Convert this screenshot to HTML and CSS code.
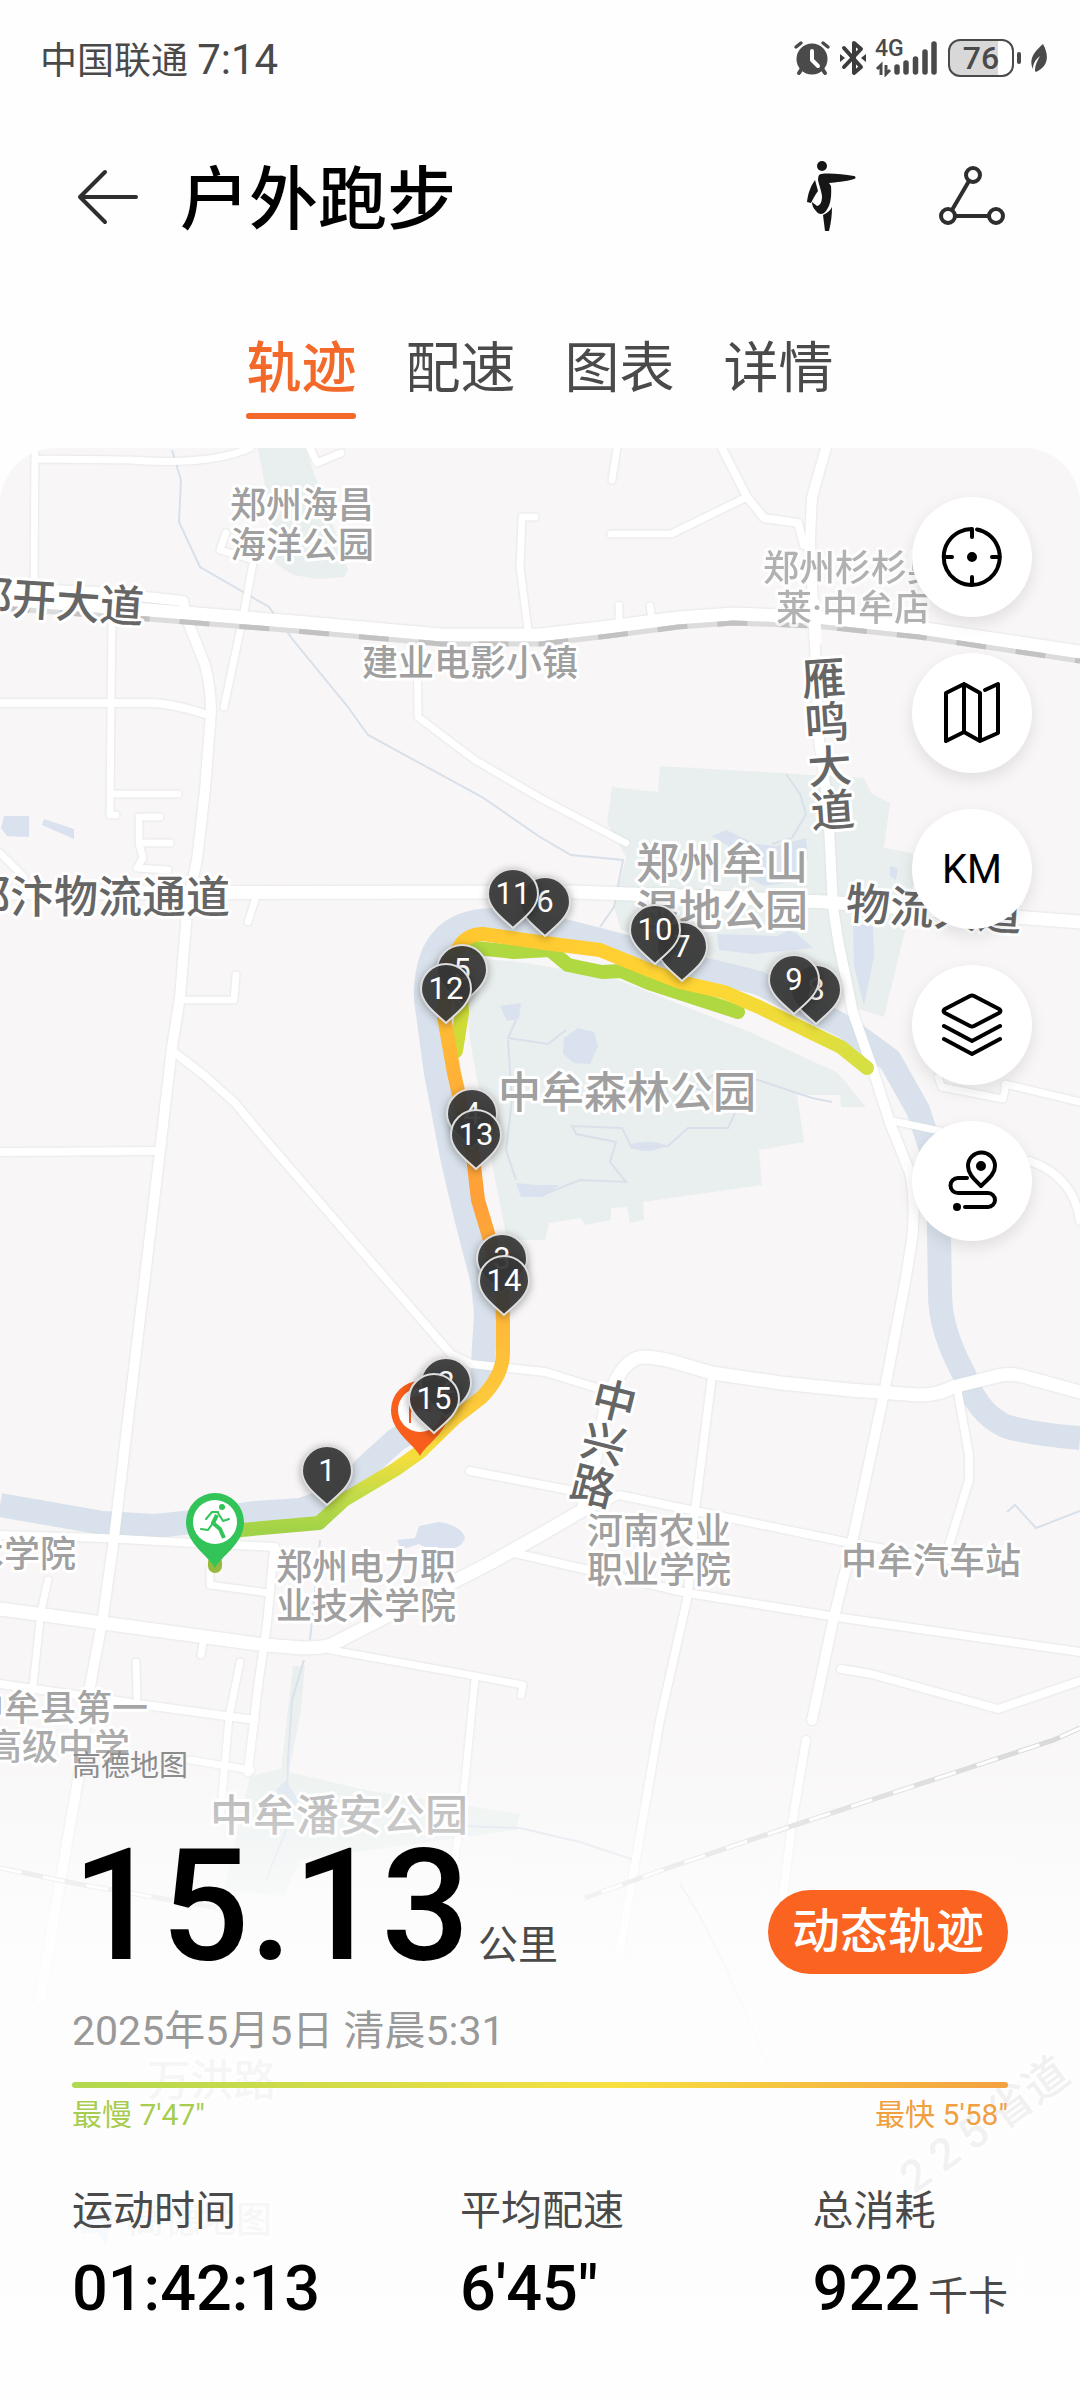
FILE: index.html
```
<!DOCTYPE html>
<html lang="zh-CN">
  <head>
    <meta charset="utf-8">
    <title>户外跑步</title>
    <meta name="viewport" content="width=device-width, initial-scale=1.0">
    <link rel="stylesheet" href="styles.css">
  </head>
  <body>
    <div class="mainbody">
      <div class="statusbar">
        <div class="carrier">中国联通 <span class="clock">7:14</span></div>
        <div class="statusicons">
          <svg width="38" height="38" viewBox="0 0 38 38">
            <path d="M10 28L6 34M28 28l4 6" stroke="#4a4a4a" stroke-width="4" stroke-linecap="round"/>
            <circle cx="19" cy="20" r="15.500" fill="#4a4a4a"/>
            <path d="M3 8l5-4M35 8l-5-4" stroke="#4a4a4a" stroke-width="3.500" stroke-linecap="round"/>
            <path d="M19 12v9l6 6" fill="none" stroke="#fff" stroke-width="4" stroke-linecap="round" stroke-linejoin="round"/>
          </svg>
          <svg width="26" height="38" viewBox="0 0 26 38">
            <path d="M4 9l17 19-7 6V4l7 6L4 28" fill="none" stroke="#3c3c3c" stroke-width="4" stroke-linejoin="round" stroke-linecap="round"/>
            <path d="M0 15l5 4-5 4zM26 15l-5 4 5 4z" fill="#3c3c3c"/>
          </svg>
          <div class="signal">
            <span class="net">4G</span>
            <svg width="64" height="38" viewBox="0 0 64 38">
              <path d="M6 36V26l-4 4M11 26v9l4-4" fill="none" stroke="#4a4a4a" stroke-width="3"/>
              <path d="M22 28v5M31 24v9M40.500 20v13M50 13v20M59 5v28" stroke="#4a4a4a" stroke-width="5.500" stroke-linecap="round"/>
            </svg>
          </div>
          <div class="battery"><span>76</span></div>
          <svg width="18" height="38" viewBox="0 0 18 38">
            <path d="M13 5c6 11 6 22-7 28l-1-1c0-7 3-11 5-15-5 4-7 8-7 13C-2 20 5 12 13 5z" fill="#4a4a4a"/>
          </svg>
        </div>
      </div>

      <div class="header">
        <button class="iconbtn" aria-label="返回">
          <svg width="72" height="72" viewBox="0 0 72 72"><path d="M33 11L8 36l25 25M8 36h56" fill="none" stroke="#2e2e2e" stroke-width="4" stroke-linecap="round" stroke-linejoin="round"/></svg>
        </button>
        <h1>户外跑步</h1>
        <button class="iconbtn" aria-label="拉伸">
          <svg width="72" height="72" viewBox="0 0 72 72" fill="#161616">
            <circle cx="26" cy="5" r="5"/>
            <path d="M25 13c9-1 21 0 33 2 2 0 2 3 0 3-9 3-18 3-25 4l2 3c1 12-1 22-7 27-3 2-6 1-8-2-3-3-4-6-4-9l5 4c4-1 5-5 5-10-1-7-3-11-4-16 0-4 1-6 3-6z"/>
            <path d="M19 19c1 4 2 7 3 11-3 4-5 8-7 12l-4-1c1-8 3-15 8-22z"/>
            <path d="M36 46c0 8-1 16-3 24h-4l-2-16c4-2 7-4 9-8z"/>
          </svg>
        </button>
        <button class="iconbtn" aria-label="分享">
          <svg width="72" height="72" viewBox="0 0 72 72" fill="none" stroke="#2e2e2e" stroke-width="4">
            <circle cx="37" cy="14" r="7"/><circle cx="12" cy="55" r="7"/><circle cx="60" cy="55" r="7"/>
            <path d="M33 20L16 49M19 55h34"/>
          </svg>
        </button>
      </div>

      <div class="tabs">
        <button class="tab active">轨迹</button>
        <button class="tab">配速</button>
        <button class="tab">图表</button>
        <button class="tab">详情</button>
      </div>

      <div class="mapbody">
        <svg class="map" viewBox="0 448 1080 1952">
          <defs>
            <linearGradient id="gradback" gradientUnits="userSpaceOnUse" x1="0" y1="930" x2="0" y2="1530">
              <stop offset="0" stop-color="#ffca2e"/>
              <stop offset=".2" stop-color="#ffb636"/>
              <stop offset=".45" stop-color="#ff9f38"/>
              <stop offset=".65" stop-color="#ffb838"/>
              <stop offset=".8" stop-color="#fdcb3c"/>
              <stop offset=".88" stop-color="#f3de3c"/>
              <stop offset=".94" stop-color="#c4dc48"/>
              <stop offset="1" stop-color="#a2d248"/>
            </linearGradient>
            <linearGradient id="gradtop" gradientUnits="userSpaceOnUse" x1="460" y1="0" x2="870" y2="0">
              <stop offset="0" stop-color="#ffc630"/>
              <stop offset=".6" stop-color="#ffd634"/>
              <stop offset=".8" stop-color="#eedc38"/>
              <stop offset="1" stop-color="#d4e044"/>
            </linearGradient>
            <path id="pin" class="pin" d="M0 34C-8 26-25 15-25 0A25 25 0 0 1 25 0C25 15 8 26 0 34z"/>
            <path id="bigpin" d="M0 46C-6 34-29 22-29 0A29 29 0 0 1 29 0C29 22 6 34 0 46z"/>
          </defs>
          <rect y="448" width="1080" height="1952" fill="#f8f6f7"/>

          <!-- parks -->
          <g fill="#e9efee">
            <path d="M258 448h47l8 22 14 37 21 63-4 7-27 2-24-4-18-12-6-56z"/>
            <path d="M660 766l204 12 7 15 19 10-6 45 28 5 6 25-11 45-23 94-31-10-15-34-79 0-138-43-7-23 12-50-19-34 5-36 46 5z"/>
            <path d="M462 957l56 5 93 15 141 56 86 40 28 34h-25l-1-12h-43l7 47-45 8 3 35-119 17 1 18-14 3-3-16-16 1v12l-26 5-4-7-32 5-4 17h-38l-13-67-24-133z"/>
            <path d="M293 1666h12l-4 44-12 62 76 18 155 24-4 16-216 30-16 36-60-6 26-114 31-7z"/>
          </g>

          <!-- water -->
          <g class="river">
            <path d="M0 1505L103 1523L155 1526L193 1522L255 1513L300 1510Q344 1498 365 1468L396 1440L448 1408L482 1380L486 1314L483 1283L466 1217L452 1157L436 1073L426 1000Q424 920 494 920L552 928L638 950L707 970L759 983L845 1027L890 1060L918 1110L938 1170L940 1294Q940 1330 964 1374Q976 1412 1005 1426Q1030 1434 1080 1438"/>
          </g>
          <g fill="#d9e2ee">
            <path d="M4 816h25v21l-22-1-6-8zM44 819l30 10v10l-32-14z"/>
            <path d="M397 1540l18-2 4-12 20-4c14 2 24 8 26 16-4 12-20 14-34 12l-12-6-18 6z"/>
            <path d="M500 1006l21-3-2 16-12 2zM564 1038l14-10 16 4 4 14-8 18-16-1-11-9z"/>
            <path d="M516 1183l20 2 23 0-16 12h-22zM628 1145q19-7 38 0-19 12-38 0z"/>
            <path d="M712 836l14-6 30 14 20 2 30-8 2 20-16 24-28 4-30-16-6-24zM717 934l60 2 12-6 8 4 16 14-60 6-34-4z"/>
            <path d="M853 924l20 2 1 30-10 50-10-40zM890 866l8 2-2 12-6-4z"/>
            <path d="M276 1790l10-10 12 20-8 20z"/>
          </g>
          <g class="stream">
            <path d="M172 450l9 30-2 42 21 45 69 40 24 33 55 67 20 28 114 62 58 40 31 18 52 5-9 47-14 20"/>
            <path d="M516 1020l-8 18 40 6 18-14 M508 1040l4 60-6 50 10 30 M540 1196l40-16 46 2-16-20 6-20-40-8-4-8 50 2 10 20 36-2 20-18 40 0 14-30-50-10 30-18 30 8 60 20 20 4"/>
            <path d="M786 774l14 20 6 20-14 24-20 6M1007 1512l8-7 21 23 44-17M320 1540l-10 100M304 1660l-12 40-4 60-2 70-20 50"/>
            <path d="M460 1826l60 2 60 14 60 20M680 1884c40 60 60 120 88 180"/>
          </g>

          <!-- roads -->
          <g class="roads">
            <g class="w6">
              <path d="M35 448l-1 140M35 459l95 1q80 6 120-12M112 623l-1 82-1 110h6M110 794h68M253 563l-10 54-19 90M226 533l-6 17 33 10M160 817h-21v26h31M139 843l4 15-6 10 31 2M255 900l-7 22M180 1000h54l2-25M535 517h-13l-2 50 8 63M617 448l-5 32M310 448l7 15 24-10M747 497l-76 37h-60M417 640l1 77 57 43 65 38 86 45M0 853l24 24M619 627v-22M652 620l-2-14"/>
              <path d="M210 1569v16l59 8M48 1580l-7 31-8 75M136 1662l1 36M240 1662l-11 55-9 103M203 1642l-2 13M190 1760l61 10M331 1650l144 26 48 9-2 10M475 1679l-14 141-10 60M893 1121l47 10M938 1077l4 10 61 12 3-14M1005 1084l75 18"/>
            </g>
            <g class="w8">
              <path d="M0 703h150q20 0 55 11M175 1053l30 23 30 27 35 42 181 209 20 10 74 8 52 16M0 1152l158-1M722 448l25 49 17 21 34 5 6 22"/>
              <path d="M0 1535l103 3 90 5 82 4M274 1549l-7 75-9 62-10 86M0 1684l138 20 117 16M712 1376l-17 135-7 84-28 125-40 230M470 1471l104 20M583 1512l36-17 81 17 150 31 100 17M510 1552l178 41 148 24 244 35M958 1393l11 62v25l-23 75M841 1669l30 5 127 35 82-28M1030 1161q44 16 50 60M806 1740l-14 84-10 80"/>
            </g>
            <g class="w10">
              <path d="M0 588l100 4 83 9 5 21 17 43q6 22 6 47l-6 78-8 70-9 40-8 97-8 50-12 104-27 226-19 161-11 79-13 69-9 76-10 58-31 180"/>
              <path d="M826 448l-14 49-2 43 5 107 4 93 9 67 5 100 5 33 15 73 19 54 18 56 20 50q6 30 2 67l-7 43-21 110-34 159-17 69-21 99"/>
            </g>
            <g class="w12">
              <path d="M0 893l540-1h34l138 5 114 5 254 20"/>
              <path d="M0 1609l103 14 162 22 38 3q18 0 28-3l161-83 48-27 43-25 24-106 9-24q12-22 27-23 12 0 28 4l41 12 69 10 69 7 69 5q20 0 34-8l48-12q14-2 28 3l51 14"/>
              <path d="M0 599l148 11 148 12 145 13h99l69-8 69-9 55-4 82 3 104 11 161 24"/>
            </g>
          </g>

          <!-- railways -->
          <g class="rail">
            <path d="M0 608l148 11 148 12 145 13h99l69-8 69-9 55-4 82 3 104 11 161 24" stroke="#dcdcdc"/>
            <path d="M0 608l148 11 148 12 145 13h99l69-8 69-9 55-4 82 3 104 11 161 24" stroke="#c2c2c2" stroke-dasharray="30 30"/>
            <path d="M1080 1728l-26 12-262 86-124 42-83 30M0 1868l83 17 158 27" stroke="#d4d4d4"/>
            <path d="M1080 1728l-26 12-262 86-124 42-83 30M0 1868l83 17 158 27" class="sleepers"/>
          </g>
          <path d="M813 600l3 44" stroke="#fff" stroke-width="12"/>

          <!-- place names -->
          <g class="place">
            <text x="302" y="518">郑州海昌</text><text x="302" y="558">海洋公园</text>
            <text x="470" y="676">建业电影小镇</text>
            <g opacity=".8"><text x="853" y="581">郑州杉杉奥</text><text x="853" y="621">莱·中牟店</text></g>
            <text x="4" y="1567">技术学院</text>
            <text x="366" y="1580">郑州电力职</text><text x="366" y="1619">业技术学院</text>
            <text x="659" y="1544">河南农业</text><text x="659" y="1583">职业学院</text>
            <text x="931" y="1574">中牟汽车站</text>
            <text x="58" y="1721">中牟县第一</text><text x="58" y="1760">高级中学</text>
            <text x="200" y="2233">高德地图</text>
          </g>
          <g class="place park">
            <text x="722" y="879">郑州牟山</text><text x="722" y="926">湿地公园</text>
            <text x="627" y="1108">中牟森林公园</text>
            <text x="339" y="1831">中牟潘安公园</text>
            <text x="212" y="2096">万洪路</text>
          </g>
          <g class="place street">
            <text x="56" y="617" transform="rotate(4 56 601)">郑开大道</text>
            <text x="98" y="913">郑汴物流通道</text>
            <text x="934" y="925" transform="rotate(4 934 909)">物流大道</text>
            <text class="upright" x="824" y="744" transform="rotate(-4 824 744)">雁鸣大道</text>
            <text class="upright" x="600" y="1442" transform="rotate(14 600 1442)">中兴路</text>
            <text x="984" y="2140" transform="rotate(-36 984 2124)">2 2 5 省道</text>
          </g>
          <path d="M82 2222l34-18-10 42-8-14-16 2z" fill="#8fc4f0"/>

          <!-- run track -->
          <g class="track">
            <path d="M476 948l38 4 36-2 18 15 34 7 19-1 28 12 89 29" stroke="#b0d840"/>
            <path d="M461 995l1 18-6 38" stroke="#cfdc38"/>
            <path d="M215 1562v4" stroke="#96b83c"/>
            <path d="M867 1068l-26-21-31-15-51-25-35-15-44-10-31-12-49-20-55-7-62-9q-14 0-22 10" stroke="url(#gradtop)"/>
            <path d="M463 943q-14 14-18 34l-1 40 10 56 19 84 5 43 12 40 12 50 1 33v30q0 22-21 44l-27 21-35 34-24 17-52 31-25 23-78 7-26 8" stroke="url(#gradback)"/>
          </g>

          <!-- start and finish -->
          <g transform="translate(420 1410)">
            <use href="#bigpin" fill="#f85f1c"/><circle r="22" fill="#fff"/>
            <path d="M-10-11v24M-10-11q10-5 20 0v12q-10-5-20 0" fill="#f85f1c" stroke="#f85f1c" stroke-width="2"/>
          </g>
          <g transform="translate(215 1522)">
            <use href="#bigpin" fill="#32c458"/><circle r="22" fill="#fff"/>
            <circle cx="7" cy="-15" r="3" fill="#32c458"/>
            <path d="M3-9l5 8 6-2M3-10l-6 0-6 7M-14 7l7 1 5-7" fill="none" stroke="#32c458" stroke-width="2" stroke-linecap="round" stroke-linejoin="round"/>
            <path d="M2-7L-2 1l7 6 4 9" fill="none" stroke="#32c458" stroke-width="4" stroke-linejoin="round"/>
          </g>

          <!-- kilometre pins -->
          <g class="pins">
            <g transform="translate(327 1471)"><use href="#pin"/><text y="10">1</text></g>
            <g transform="translate(446 1383)"><use href="#pin"/><text y="10">2</text></g>
            <g transform="translate(502 1259)"><use href="#pin"/><text y="10">3</text></g>
            <g transform="translate(472 1114)"><use href="#pin"/><text y="10">4</text></g>
            <g transform="translate(462 970)"><use href="#pin"/><text y="10">5</text></g>
            <g transform="translate(545 902)"><use href="#pin"/><text y="10">6</text></g>
            <g transform="translate(682 947)"><use href="#pin"/><text y="10">7</text></g>
            <g transform="translate(816 990)"><use href="#pin"/><text y="10">8</text></g>
            <g transform="translate(794 980)"><use href="#pin"/><text y="10">9</text></g>
            <g transform="translate(655 930)"><use href="#pin"/><text y="10">10</text></g>
            <g transform="translate(513 894)"><use href="#pin"/><text y="10">11</text></g>
            <g transform="translate(446 989)"><use href="#pin"/><text y="10">12</text></g>
            <g transform="translate(476 1135)"><use href="#pin"/><text y="10">13</text></g>
            <g transform="translate(504 1281)"><use href="#pin"/><text y="10">14</text></g>
            <g transform="translate(434 1399)"><use href="#pin"/><text y="10">15</text></g>
          </g>
        </svg>

        <div class="tools">
          <button class="tool" aria-label="定位">
            <svg width="64" height="64" viewBox="0 0 64 64">
              <path d="M37 4.500A28 28 0 1 1 32 4v8M4 32h8M52 32h8M32 52v8"/>
              <circle cx="32" cy="32" r="3" fill="#000"/>
            </svg>
          </button>
          <button class="tool" aria-label="地图类型">
            <svg width="64" height="64" viewBox="0 0 64 64"><path d="M45 9l13-6v49l-18 8-16-9-18 9V12l18-9 16 9v48M24 3v48"/></svg>
          </button>
          <button class="tool">KM</button>
          <button class="tool" aria-label="图层">
            <svg width="64" height="64" viewBox="0 0 64 64"><path d="M30 3L5 16q-3 2 0 4l25 13q2 1 4 0l25-13q3-2 0-4L34 3q-2-1-4 0zM4 33l28 15 28-15M4 46l28 15 28-15"/></svg>
          </button>
          <button class="tool" aria-label="路线">
            <svg width="64" height="64" viewBox="0 0 64 64">
              <path d="M41 37c-7-7-13-12-13-20a13 13 0 0 1 27 0c0 8-7 13-14 20zM27 29H18a7 7 0 0 0 0 15h30a7 7 0 0 1 0 14H25"/>
              <circle cx="41" cy="17" r="3" fill="#000"/><circle cx="17" cy="58" r="2" fill="#000"/>
            </svg>
          </button>
        </div>

        <div class="panel">
          <div class="mapcredit">高德地图</div>
          <div class="distancerow">
            <div class="distance">15.13<span class="unit">公里</span></div>
            <button class="btnplay">动态轨迹</button>
          </div>
          <div class="date">2025年5月5日 清晨5:31</div>
          <div class="pacebar"></div>
          <div class="pacerange">
            <span class="slow">最慢 7'47"</span>
            <span class="fast">最快 5'58"</span>
          </div>
          <dl class="stats">
            <div><dt>运动时间</dt><dd>01:42:13</dd></div>
            <div><dt>平均配速</dt><dd>6'45"</dd></div>
            <div><dt>总消耗</dt><dd>922<span class="unit">千卡</span></dd></div>
          </dl>
        </div>
      </div>
    </div>
  </body>
</html>
```
FILE: styles.css
```
*{box-sizing:border-box;margin:0;padding:0;font-family:Roboto,"Noto Sans CJK SC",sans-serif;}
body{background:#fefefe;color:#000;}
button{background:none;border:none;cursor:pointer;color:#000;}
svg{display:block;}
.mainbody{width:100%;}

.statusbar{height:116px;padding:0 32px 0 40px;display:flex;align-items:center;justify-content:space-between;
  color:#4a4a4a;font-size:37px;}
.clock{font-size:42px;}
.statusicons{display:flex;align-items:center;gap:9px;}
.signal{position:relative;}
.net{position:absolute;top:0;left:0;font-size:23px;line-height:20px;font-weight:500;}
.battery{position:relative;width:66px;height:38px;margin-right:7px;border:2px solid #4a4a4a;border-radius:12px;
  background:linear-gradient(to right, #d8d8d8 78%, #fff 78%);display:flex;align-items:center;justify-content:center;}
.battery span{font-size:32px;line-height:34px;font-weight:500;}
.battery::after{content:"";position:absolute;right:-9px;top:11px;width:4px;height:12px;border-radius:2px;background:#4a4a4a;}

.header{height:162px;padding:0 72px;display:flex;align-items:center;gap:68px;}
.header h1{flex:1;margin-left:-32px;padding-top:8px;font-size:69px;font-weight:500;line-height:80px;}
.iconbtn{width:72px;height:72px;}
.iconbtn svg{overflow:visible;}

.tabs{padding:58px 0 29px;display:flex;justify-content:center;gap:49px;}
.tab{position:relative;font-size:55px;line-height:64px;padding-bottom:19px;color:#4a4a4a;}
.tab.active{color:#f2692a;font-weight:500;}
.tab.active::after{content:"";position:absolute;left:0;bottom:0;width:100%;height:6px;border-radius:3px;background:#f2692a;}

/* map, tools and panel share one grid cell */
.mapbody{display:grid;border-radius:56px 56px 0 0;overflow:hidden;}
.mapbody > *{grid-area:1/1;}
.map{width:100%;height:auto;}
.river{fill:none;stroke:#d9e2ec;stroke-width:24;stroke-linejoin:round;}
.stream{fill:none;stroke:#d9e0ea;stroke-width:2;}
.roads{fill:none;stroke:#fff;stroke-linejoin:round;stroke-linecap:round;filter:drop-shadow(0 0 1px #d4dad8);}
.w6{stroke-width:7;}
.w8{stroke-width:8;}
.w10{stroke-width:10;}
.w12{stroke-width:13;}
.rail{fill:none;stroke-width:5;}
.sleepers{stroke:#fff;stroke-width:3;stroke-dasharray:22 22;}
.place{font-size:36px;font-weight:500;text-anchor:middle;fill:#a0a0a0;stroke:#fff;stroke-width:6px;
  stroke-linejoin:round;paint-order:stroke;}
.park{font-size:43px;}
.street{font-size:44px;fill:#666;}
.upright{writing-mode:vertical-rl;}
.track{fill:none;stroke-width:14;stroke-linejoin:round;stroke-linecap:round;}
.pin{fill:#373737;fill-opacity:.92;stroke:#dedede;stroke-width:2;filter:drop-shadow(0 2px 4px rgba(0,0,0,.35));}
.pins text{font-size:31px;fill:#fff;text-anchor:middle;}

.tools{justify-self:end;align-self:start;padding:49px 48px 0 0;display:flex;flex-direction:column;gap:36px;z-index:1;}
.tool{width:120px;height:120px;border-radius:50%;background:#fff;display:flex;align-items:center;justify-content:center;
  font-size:40px;box-shadow:0 6px 16px rgba(0,0,0,.1);}
.tool svg{fill:none;stroke:#000;stroke-width:4;stroke-linecap:round;stroke-linejoin:round;}

.panel{align-self:end;padding:120px 72px 75px;
  background:linear-gradient(to bottom, rgba(254,254,254,0) 6%, rgba(254,254,254,.15) 16%, rgba(254,254,254,.4) 25%,
  rgba(254,254,254,.75) 36%, rgba(254,254,254,.9) 50%, rgba(254,254,254,.94) 100%);}
.mapcredit{font-size:29px;line-height:32px;color:#8c8c8c;}
.distancerow{margin-top:44px;display:flex;justify-content:space-between;align-items:flex-end;}
.distance{font-size:156px;line-height:160px;font-weight:500;}
.unit{font-size:40px;line-height:40px;font-weight:400;color:#4a4a4a;margin-left:8px;}
.btnplay{width:240px;height:84px;margin-bottom:12px;border-radius:42px;background:#fa6420;color:#fff;font-size:48px;
  font-weight:500;line-height:84px;}
.date{margin-top:21px;font-size:41px;line-height:48px;color:#999;}
.pacebar{margin-top:27px;height:6px;border-radius:3px;background:linear-gradient(to right, #b0d850, #f8e040 58%, #f4a040);}
.pacerange{margin-top:11px;display:flex;justify-content:space-between;font-size:30px;line-height:32px;}
.slow{color:#a8cc50;}
.fast{color:#f0a040;}
.stats{margin-top:56px;display:grid;grid-template-columns:11fr 10fr auto;}
.stats dt{font-size:41px;line-height:48px;color:#4a4a4a;}
.stats dd{margin-top:18px;font-size:63px;line-height:72px;font-weight:500;white-space:nowrap;}
```
